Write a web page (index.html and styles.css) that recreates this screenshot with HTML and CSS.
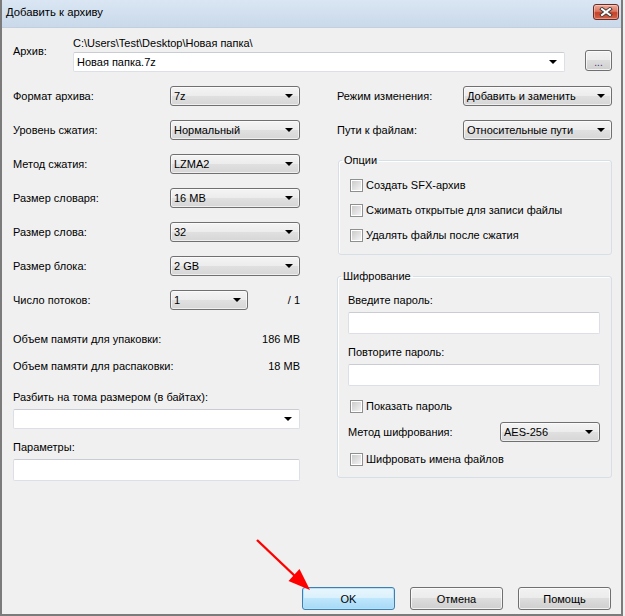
FILE: index.html
```html
<!DOCTYPE html>
<html lang="ru">
<head>
<meta charset="utf-8">
<title>Добавить к архиву</title>
<link rel="stylesheet" href="styles.css">
</head>
<body>
<div class="window">
  <div class="titlebar">
    <span class="title">Добавить к архиву</span>
    <div class="close">
      <svg width="14" height="10" viewBox="0 0 14 10">
        <path d="M3 2 L11 8 M11 2 L3 8" stroke="#3a3a3a" stroke-width="3.8" stroke-linecap="square" fill="none"/>
        <path d="M3 2 L11 8 M11 2 L3 8" stroke="#ffffff" stroke-width="2" stroke-linecap="square" fill="none"/>
      </svg>
    </div>
  </div>
  <div class="content">
    <div class="archive-row">
      <div class="archive-label">Архив:</div>
      <div class="archive-main">
        <div class="path">C:\Users\Test\Desktop\Новая папка\</div>
        <div class="edit combo-edit"><span>Новая папка.7z</span><i class="tri"></i></div>
      </div>
      <div class="btn browse">...</div>
    </div>

    <div class="columns">
      <div class="left">
        <div class="form-grid">
          <div class="lbl">Формат архива:</div>
          <div class="dd"><span>7z</span><i class="tri"></i></div>
          <div class="lbl">Уровень сжатия:</div>
          <div class="dd"><span>Нормальный</span><i class="tri"></i></div>
          <div class="lbl">Метод сжатия:</div>
          <div class="dd"><span>LZMA2</span><i class="tri"></i></div>
          <div class="lbl">Размер словаря:</div>
          <div class="dd"><span>16 MB</span><i class="tri"></i></div>
          <div class="lbl">Размер слова:</div>
          <div class="dd"><span>32</span><i class="tri"></i></div>
          <div class="lbl">Размер блока:</div>
          <div class="dd"><span>2 GB</span><i class="tri"></i></div>
          <div class="lbl">Число потоков:</div>
          <div class="threads">
            <div class="dd dd-short"><span>1</span><i class="tri"></i></div>
            <span class="of">/ 1</span>
          </div>
        </div>

        <div class="mem first"><span>Объем памяти для упаковки:</span><span>186 MB</span></div>
        <div class="mem"><span>Объем памяти для распаковки:</span><span>18 MB</span></div>

        <div class="stack-label split-label">Разбить на тома размером (в байтах):</div>
        <div class="edit combo-edit"><span></span><i class="tri"></i></div>

        <div class="stack-label params-label">Параметры:</div>
        <div class="edit text-input"></div>
      </div>

      <div class="right">
        <div class="rrow">
          <div class="rlbl">Режим изменения:</div>
          <div class="dd dd-right"><span>Добавить и заменить</span><i class="tri"></i></div>
        </div>
        <div class="rrow second">
          <div class="rlbl">Пути к файлам:</div>
          <div class="dd dd-right"><span>Относительные пути</span><i class="tri"></i></div>
        </div>

        <fieldset class="group options">
          <legend>Опции</legend>
          <div class="options-body">
            <div class="chk-row"><i class="chk"></i><span>Создать SFX-архив</span></div>
            <div class="chk-row"><i class="chk"></i><span>Сжимать открытые для записи файлы</span></div>
            <div class="chk-row"><i class="chk"></i><span>Удалять файлы после сжатия</span></div>
          </div>
        </fieldset>

        <fieldset class="group crypt">
          <legend>Шифрование</legend>
          <div class="crypt-body">
            <div class="stack-label">Введите пароль:</div>
            <div class="edit text-input"></div>
            <div class="stack-label repeat-label">Повторите пароль:</div>
            <div class="edit text-input"></div>
            <div class="chk-row show-pass"><i class="chk"></i><span>Показать пароль</span></div>
            <div class="method-row">
              <span>Метод шифрования:</span>
              <div class="dd dd-aes"><span>AES-256</span><i class="tri"></i></div>
            </div>
            <div class="chk-row names"><i class="chk"></i><span>Шифровать имена файлов</span></div>
          </div>
        </fieldset>
      </div>
    </div>

    <div class="buttons">
      <div class="btn btn-main default">OK</div>
      <div class="btn btn-main">Отмена</div>
      <div class="btn btn-main">Помощь</div>
    </div>
  </div>

  <svg class="pointer" width="625" height="616" viewBox="0 0 625 616">
    <line x1="257" y1="540" x2="297" y2="578" stroke="#ff0000" stroke-width="2.4"/>
    <polygon points="310,590 288.5,581 299.5,569" fill="#ff0000"/>
  </svg>
</div>
</body>
</html>
```

FILE: styles.css
```css
* { box-sizing: border-box; }

html, body {
  margin: 0;
  padding: 0;
}

body {
  width: 625px;
  height: 616px;
  overflow: hidden;
  background: #f0f0f0;
  font-family: "Liberation Sans", Arial, sans-serif;
  font-size: 11px;
  color: #000;
}

.window {
  position: relative;
  width: 623px;
  height: 616px;
  display: flex;
  flex-direction: column;
  border-left: 2px solid #7b7b7b;
  border-right: 2px solid #7b7b7b;
  border-bottom: 2px solid #7b7b7b;
  background: #f0f0f0;
}

/* ---------- title bar ---------- */
.titlebar {
  height: 28px;
  flex: none;
  display: flex;
  align-items: flex-start;
  padding-left: 4px;
  background: linear-gradient(#dae6f3, #c9d9ea);
  border-bottom: 1px solid #c3cfdc;
}

.title {
  font-size: 11.3px;
  margin-top: 6px;
}

.close {
  margin-left: auto;
  margin-right: 2px;
  margin-top: 4px;
  width: 26px;
  height: 16px;
  border: 1px solid #6b2a22;
  border-radius: 3px;
  display: flex;
  align-items: center;
  justify-content: center;
  background: linear-gradient(#eeaa9a 0%, #dc7560 45%, #c63f26 55%, #d4654a 100%);
  box-shadow: inset 0 0 0 1px rgba(255, 255, 255, 0.35);
}

/* ---------- content ---------- */
.content {
  flex: 1;
  display: flex;
  flex-direction: column;
  padding: 8px 9px 4px 11px;
}

.archive-row {
  display: flex;
  align-items: flex-start;
}

.archive-label {
  width: 60px;
  padding-top: 9px;
}

.archive-main {
  flex: 1;
}

.path {
  height: 14px;
  line-height: 14px;
  margin-bottom: 2px;
}

.edit {
  background: #fff;
  border: 1px solid #dcdfe5;
  border-top-color: #c9ccd3;
  border-radius: 2px;
}

.combo-edit {
  height: 20px;
  display: flex;
  align-items: center;
  justify-content: space-between;
  padding: 0 7px 0 3px;
}

.text-input {
  height: 22px;
}

.tri {
  display: block;
  width: 0;
  height: 0;
  border-left: 4px solid transparent;
  border-right: 4px solid transparent;
  border-top: 4px solid #000;
}

/* ---------- buttons ---------- */
.btn {
  border: 1px solid #707070;
  border-radius: 3px;
  background: linear-gradient(#f2f2f2 0%, #ebebeb 49%, #dddddd 50%, #cfcfcf 100%);
  box-shadow: inset 0 0 0 1px rgba(255, 255, 255, 0.7);
  display: flex;
  align-items: center;
  justify-content: center;
}

.browse {
  width: 27px;
  height: 21px;
  margin-left: 20px;
  margin-top: 14px;
  font-size: 10px;
  color: #3c2f6e;
  padding-top: 3px;
}

.btn-main {
  width: 93px;
  height: 23px;
}

.default {
  border-color: #3c7fb1;
  background: linear-gradient(#eaf6fd 0%, #d9f0fc 49%, #bee6fd 50%, #a7d9f5 100%);
  box-shadow: inset 0 0 0 1px #b6e1f8;
}

.buttons {
  margin-top: auto;
  display: flex;
  justify-content: flex-end;
  gap: 15px;
  padding-right: 1px;
}

/* ---------- columns ---------- */
.columns {
  display: flex;
  justify-content: space-between;
  margin-top: 14px;
}

.left {
  width: 287px;
}

.right {
  width: 275px;
}

.form-grid {
  display: grid;
  grid-template-columns: 157px 130px;
  grid-template-rows: repeat(7, 20px);
  row-gap: 14px;
  align-items: center;
}

.dd {
  height: 20px;
  border: 1px solid #707070;
  border-radius: 3px;
  background: linear-gradient(#f4f4f4 0%, #ececec 50%, #e0e0e0 51%, #d6d6d6 100%);
  box-shadow: inset 0 0 0 1px rgba(255, 255, 255, 0.6);
  display: flex;
  align-items: center;
  justify-content: space-between;
  padding: 0 6px 0 3px;
}

.threads {
  display: flex;
  align-items: center;
  justify-content: space-between;
}

.dd-short {
  width: 78px;
}

.mem {
  display: flex;
  justify-content: space-between;
  height: 14px;
  line-height: 14px;
  margin-top: 13px;
}

.mem.first {
  margin-top: 22px;
}

.stack-label {
  height: 14px;
  line-height: 14px;
  margin-bottom: 5px;
}

.split-label {
  margin-top: 17px;
}

.params-label {
  margin-top: 11px;
}

/* ---------- right column ---------- */
.rrow {
  display: flex;
  align-items: center;
  height: 20px;
}

.rrow.second {
  margin-top: 14px;
}

.rlbl {
  width: 126px;
}

.dd-right {
  width: 149px;
}

.group {
  margin: 0;
  padding: 0;
  border: 1px solid #d5dfe5;
  border-radius: 3px;
  box-shadow: inset 1px 1px 0 #fff;
  min-width: 0;
}

.group legend {
  margin-left: 3px;
  padding: 0 2px;
  line-height: 14px;
}

.options {
  margin-top: 13px;
  margin-left: 1px;
}

.options-body {
  padding: 11px 10px 12px 11px;
  display: flex;
  flex-direction: column;
  gap: 11px;
}

.chk-row {
  display: flex;
  align-items: center;
  height: 14px;
}

.chk {
  position: relative;
  display: block;
  width: 13px;
  height: 13px;
  margin-right: 3px;
  border: 1px solid #8e8f8f;
  background: #fff;
}

.chk::after {
  content: "";
  position: absolute;
  left: 1px;
  top: 1px;
  right: 1px;
  bottom: 1px;
  background: linear-gradient(135deg, #cbcbcb, #f3f3f3);
}

.crypt {
  margin-top: 14px;
}

.crypt-body {
  padding: 10px 11px 11px 10px;
}

.repeat-label {
  margin-top: 11px;
}

.show-pass {
  margin-top: 13px;
  margin-left: 2px;
}

.method-row {
  margin-top: 9px;
  height: 20px;
  display: flex;
  align-items: center;
  justify-content: space-between;
}

.dd-aes {
  width: 100px;
}

.names {
  margin-top: 10px;
  margin-left: 2px;
}

/* ---------- annotation arrow ---------- */
.pointer {
  position: absolute;
  left: -2px;
  top: 0;
  pointer-events: none;
}
```
